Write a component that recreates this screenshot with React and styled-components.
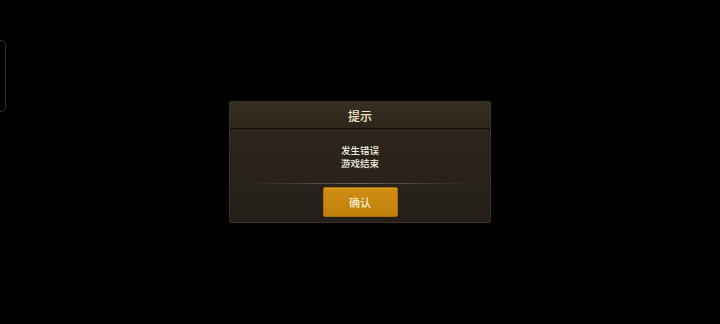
import React from 'react';
import styled, { createGlobalStyle } from 'styled-components';

const GlobalStyle = createGlobalStyle`
  html, body {
    margin: 0;
    padding: 0;
    background: #000;
  }
  body {
    font-family: "Noto Sans CJK SC", "Noto Sans", sans-serif;
  }
`;

const Screen = styled.div`
  position: relative;
  width: 720px;
  height: 324px;
  background: #000;
  display: flex;
  align-items: flex-start;
  justify-content: center;
  padding-top: 101px;
  box-sizing: border-box;
  overflow: hidden;
`;

const SideHandle = styled.div`
  position: absolute;
  left: -20px;
  top: 40px;
  width: 24px;
  height: 70px;
  border: 1px solid #2e2e2e;
  border-radius: 5px;
`;

const Dialog = styled.div`
  width: 262px;
  height: 122px;
  box-sizing: border-box;
  display: flex;
  flex-direction: column;
  background: linear-gradient(180deg, #2c251c 0%, #29231b 60%, #231e17 100%);
  border: 1px solid #3a3127;
  border-radius: 2px;
`;

const Header = styled.div`
  height: 26px;
  flex-shrink: 0;
  display: flex;
  align-items: center;
  justify-content: center;
  background: linear-gradient(180deg, #382e22 0%, #2e261c 100%);
  border-bottom: 2px solid #19140f;
  box-shadow: 0 1px 0 #3d3326;
  color: #f3e7c6;
  font-size: 12px;
  font-weight: 500;
`;

const Body = styled.div`
  height: 53px;
  flex-shrink: 0;
  display: flex;
  flex-direction: column;
  align-items: center;
  justify-content: center;
  color: #f2ede2;
  font-size: 9.5px;
  font-weight: 500;
  line-height: 12.5px;
`;

const Divider = styled.div`
  width: 230px;
  height: 1px;
  flex-shrink: 0;
  margin: 0 auto;
  background: linear-gradient(90deg, rgba(120,105,85,0) 0%, #6f6250 50%, rgba(120,105,85,0) 100%);
`;

const Footer = styled.div`
  display: flex;
  justify-content: center;
  padding: 3px 0 4px;
`;

const Button = styled.button`
  width: 75px;
  height: 30px;
  border: 1px solid #a86c08;
  border-radius: 2px;
  background: linear-gradient(180deg, #d08d12 0%, #c0800c 100%);
  color: #f7eccb;
  font-family: inherit;
  font-size: 11px;
  font-weight: 500;
  padding: 0;
  box-shadow: inset 0 1px 0 rgba(255, 210, 120, 0.25);
`;

export default function App() {
  return (
    <>
      <GlobalStyle />
      <Screen>
        <SideHandle />
        <Dialog>
          <Header>提示</Header>
          <Body>
            <div>发生错误</div>
            <div>游戏结束</div>
          </Body>
          <Divider />
          <Footer>
            <Button>确认</Button>
          </Footer>
        </Dialog>
      </Screen>
    </>
  );
}
